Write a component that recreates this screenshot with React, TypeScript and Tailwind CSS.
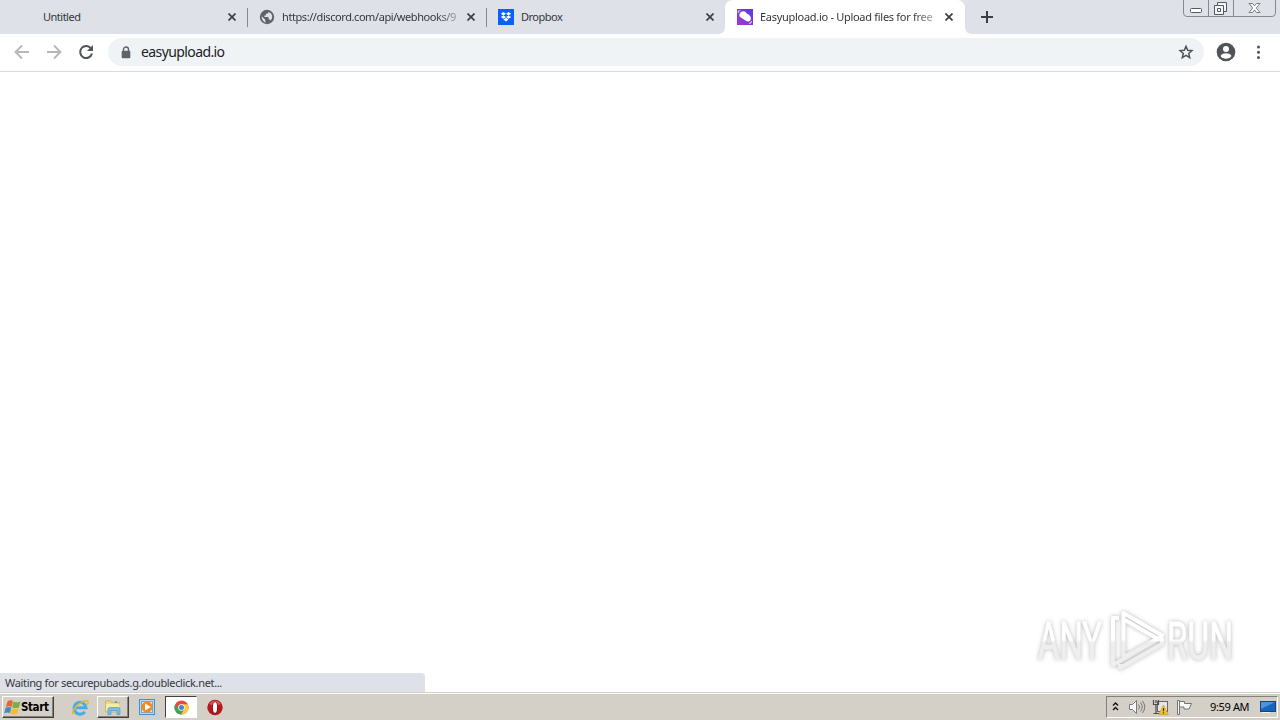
import type { ReactNode } from 'react'
import clsx from 'clsx'

export default function App() {
  return (
    <div className="flex h-[720px] w-[1280px] flex-col overflow-hidden bg-white font-['Noto_Sans','Open_Sans',sans-serif] text-[11px] text-[#34373b]">
      <TabStrip />
      <Toolbar />
      <main className="relative flex-1">
        <Watermark />
        <div className="absolute bottom-0 left-0 flex h-[19px] w-[425px] items-center rounded-tr-[4px] bg-[#dee1e8] pl-[5px] pt-[2px]">
          <span className="whitespace-nowrap tracking-[-0.34px]">Waiting for securepubads.g.doubleclick.net...</span>
        </div>
      </main>
      <Taskbar />
    </div>
  )
}

/* Tabs */

function TabStrip() {
  return (
    <header className="relative flex h-[34px] shrink-0 bg-[#dee1e8]">
      <Tab title="Untitled" className="w-[248px] pl-[43px]" titleClass="tracking-[-0.5px]" divider />
      <Tab title="https://discord.com/api/webhooks/9" icon={<GlobeIcon />} className="w-[239px] pl-[11px]" titleClass="tracking-[-0.42px]" divider fade />
      <Tab title="Dropbox" icon={<DropboxIcon />} className="w-[238px] pl-[11px]" titleClass="tracking-[-0.5px]" />
      <Tab title="Easyupload.io - Upload files for free" icon={<EasyuploadIcon />} className="w-[240px] pl-[12px]" titleClass="tracking-[-0.29px]" active fade />
      <svg className="ml-[16px] mt-[11px]" width="12" height="12" viewBox="0 0 12 12" stroke="#3c4043" strokeWidth="2">
        <path d="M6 0v12M0 6h12" />
      </svg>
      <WindowButtons />
    </header>
  )
}

function Tab({
  title,
  icon,
  className,
  titleClass,
  active,
  divider,
  fade,
}: {
  title: string
  icon?: ReactNode
  className: string
  titleClass?: string
  active?: boolean
  divider?: boolean
  fade?: boolean
}) {
  return (
    <div className={clsx('relative flex shrink-0 items-center', active && 'rounded-t-[8px] bg-white', className)}>
      {icon && <span className="mr-[7px] shrink-0">{icon}</span>}
      <span
        className={clsx(
          'w-[176px] whitespace-nowrap',
          fade && '[mask-image:linear-gradient(to_right,black_87%,#0005)]',
          titleClass,
        )}
      >
        {title}
      </span>
      <svg className={clsx('absolute top-[13px]', active || divider ? 'right-[12px]' : 'right-[11px]')} width="8" height="8" viewBox="0 0 8 8" stroke="#3c4043" strokeWidth="1.7">
        <path d="M.5.5l7 7M7.5.5l-7 7" />
      </svg>
      {divider && <i className="absolute right-0 top-[8px] h-[19px] w-px bg-[#85888d]" />}
      {active && (
        <>
          <svg className="absolute bottom-0 left-[-7px]" width="7" height="7" viewBox="0 0 7 7">
            <path d="M7 0v7H0Q7 7 7 0Z" fill="#fff" />
          </svg>
          <svg className="absolute bottom-0 right-[-7px]" width="7" height="7" viewBox="0 0 7 7">
            <path d="M0 0v7h7Q0 7 0 0Z" fill="#fff" />
          </svg>
        </>
      )}
    </div>
  )
}

function WindowButtons() {
  return (
    <div className="absolute right-[4px] top-[-2px] flex h-[19px] w-[93px] overflow-hidden rounded-b-[4px] border border-[#858990] bg-[#dee1e8]">
      <div className="w-[25px] border-r border-[#858990]">
        <svg width="24" height="18" viewBox="0 0 24 18">
          <rect x="6.5" y="9.5" width="11" height="4" rx="1" fill="#fff" stroke="#55585f" />
        </svg>
      </div>
      <div className="w-[25px] border-r border-[#858990]">
        <svg width="24" height="18" viewBox="0 0 24 18" fill="#f5f6f8" stroke="#55585f">
          <path d="M8.500 3.500h9v9h-9z" />
          <path d="M5.500 6.500h9v9h-9z" />
          <path d="M8.500 9.500h3v3h-3z" />
        </svg>
      </div>
      <svg width="41" height="18" viewBox="0 0 41 18" fill="#fff" stroke="#6c7077" strokeWidth=".9">
        <path d="M15 4.500h3.500l2 2.300 2-2.300H26l-3.700 4.500 3.700 4.500h-3.500l-2-2.500-2 2.500H15L18.700 9Z" />
      </svg>
    </div>
  )
}

/* Address bar */

function Toolbar() {
  return (
    <div className="flex h-[38px] shrink-0 items-center border-b border-[#d9dadb] bg-white pb-px">
      <svg className="ml-[14px]" width="16" height="16" viewBox="0 0 16 16" fill="none" stroke="#b5b7ba" strokeWidth="1.8">
        <path d="M15 8H2M8 1.500L1.500 8 8 14.500" />
      </svg>
      <svg className="ml-[16px]" width="16" height="16" viewBox="0 0 16 16" fill="none" stroke="#b5b7ba" strokeWidth="1.8">
        <path d="M1 8h13M8 1.500L14.500 8 8 14.500" />
      </svg>
      <svg className="ml-[16px]" width="16" height="16" viewBox="0 0 16 16" fill="none" stroke="#505357" strokeWidth="2">
        <path d="M13.200 4.700A6 6 0 1 0 14 9.500" />
        <path d="M15 1v6H9Z" fill="#505357" stroke="none" />
      </svg>
      <div className="ml-[14px] flex h-[28px] w-[1096px] items-center rounded-full bg-[#f0f3f5]">
        <svg className="ml-[13px]" width="10" height="13" viewBox="0 0 10 13">
          <path d="M2.500 5V3.500a2.500 2.500 0 0 1 5 0V5" fill="none" stroke="#5f6368" strokeWidth="1.400" />
          <rect x=".7" y="4.800" width="8.600" height="7.400" rx="1" fill="#5f6368" />
        </svg>
        <span className="ml-[10px] pb-[2px] text-[14px] tracking-[-0.6px] text-[#202124]">easyupload.io</span>
        <svg className="ml-auto mr-[10px]" width="16" height="16" viewBox="0 0 16 16" fill="none" stroke="#505357" strokeWidth="1.500">
          <path d="M8 2.300l1.700 3.900 4.200.4-3.200 2.800 1 4.200L8 11.400l-3.700 2.200 1-4.200-3.200-2.800 4.200-.4Z" />
        </svg>
      </div>
      <svg className="ml-[12px]" width="20" height="20" viewBox="0 0 20 20">
        <circle cx="10" cy="10" r="9.300" fill="#505357" />
        <circle cx="10" cy="7" r="3" fill="#fff" />
        <path d="M4.500 14c1.100-2 3.200-2.700 5.500-2.700s4.400.7 5.500 2.700A6.700 6.700 0 0 1 4.500 14Z" fill="#fff" />
      </svg>
      <svg className="ml-[20px]" width="5" height="16" viewBox="0 0 5 16" fill="#505357">
        <circle cx="2.500" cy="3" r="1.500" />
        <circle cx="2.500" cy="8.300" r="1.500" />
        <circle cx="2.500" cy="13.600" r="1.500" />
      </svg>
    </div>
  )
}

function GlobeIcon() {
  return (
    <svg width="16" height="16" viewBox="0 0 16 16">
      <circle cx="8" cy="8" r="7.200" fill="#5f6368" />
      <path d="M9.500 3c-.2 1.300-1 1.800-2.700 2v1.400H5.400v1.500h3.900c.5.900.4 1.900.6 2.500 1.100 0 1.500.5 1.800 1.100A5 5 0 0 0 9.500 3ZM2.700 7.200l3.500 3.500v1.100c.1.700.7 1.100.8 1.600-2.700-.5-4.500-3.200-4.300-6.200Z" fill="#dee1e8" />
    </svg>
  )
}

function DropboxIcon() {
  return (
    <svg width="16" height="16" viewBox="0 0 16 16">
      <rect width="16" height="16" fill="#0861fd" />
      <path d="M5.400 3L8 4.700 5.400 6.400 2.800 4.700ZM10.600 3l2.600 1.700-2.600 1.700L8 4.700ZM2.800 8.100l2.600-1.700L8 8.100 5.400 9.800ZM10.600 6.400l2.600 1.700-2.600 1.700L8 8.100ZM5.400 10.500L8 8.800l2.600 1.700L8 12.600Z" fill="#fff" />
    </svg>
  )
}

function EasyuploadIcon() {
  return (
    <svg width="16" height="16" viewBox="0 0 16 16">
      <defs>
        <linearGradient id="eu" x1="1" y1="0" x2="0" y2="1">
          <stop stopColor="#5b38ee" />
          <stop offset="1" stopColor="#a33bc2" />
        </linearGradient>
      </defs>
      <rect width="16" height="16" fill="url(#eu)" />
      <path d="M3.500 3.500C5.500 1.600 8.600 2.200 9.600 4.500c3 .9 4.800 3.800 4.200 6-.6 2.100-3 2.600-5 1.300L3.400 8.300C1.900 7 2 4.900 3.500 3.500Z" fill="#fff" />
      <path d="M1.200 4.200Q.8 1.800 3.400 1.500M12 14.300q2.300.2 2.500-2.300" stroke="#dcc3f5" strokeWidth="1.200" fill="none" />
    </svg>
  )
}

/* Logo in the corner of the page */

function Watermark() {
  return (
    <svg className="absolute bottom-[12px] right-[40px] overflow-visible drop-shadow-[0_0_2px_rgba(0,0,0,0.28)]" width="210" height="80" viewBox="0 0 210 80">
      <defs>
        <linearGradient id="wm" x1="0" y1="0" x2="0" y2="80" gradientUnits="userSpaceOnUse">
          <stop offset=".5" stopColor="#fff" />
          <stop offset=".53" stopColor="#eee" />
          <stop offset="1" stopColor="#efefef" />
        </linearGradient>
      </defs>
      <g fill="url(#wm)" stroke="url(#wm)" strokeWidth=".8" fontFamily="Roboto, sans-serif" fontSize="51">
        <text x="8" y="59" textLength="64" lengthAdjust="spacingAndGlyphs">ANY</text>
        <text x="137" y="59" textLength="66" lengthAdjust="spacingAndGlyphs">RUN</text>
      </g>
      <g fill="none" stroke="url(#wm)" strokeWidth="4" strokeLinejoin="round">
        <path d="M93.500 57V13L132 35.500l-3 4L95 20" />
        <path d="M89 18h-6v47l48-28" />
        <path d="M93.500 57L129 38" />
        <path d="M90 64v4l42-24v-6" />
      </g>
    </svg>
  )
}

/* Taskbar */

function Taskbar() {
  return (
    <footer className="flex h-[28px] shrink-0 items-start border-t border-[#d4d0c8] bg-[#d4d0c8] text-black">
      <div className="flex h-full w-full items-start border-t border-white pt-[2px]">
        <div className="ml-[2px] flex h-[22px] w-[52px] items-center border border-b-[#404040] border-l-white border-r-[#404040] border-t-white pl-px shadow-[inset_-1px_-1px_#858178]">
          <WindowsFlag />
          <span className="pt-px font-['DejaVu_Sans_Condensed','Noto_Sans',sans-serif] text-[11.5px] font-bold tracking-[-0.4px]">Start</span>
        </div>
        <svg className="ml-[17px] mt-[3px]" width="18" height="17" viewBox="0 0 18 17" fill="none">
          <path d="M13.800 12.800A6 6 0 1 1 15 8.800H5" stroke="#45ade8" strokeWidth="3" />
          <path d="M3.500 13.200C.2 16.700.8 12.200 4.500 8.200S14 .8 16.500 2c1.100.7.5 2.500-.5 4" stroke="#e5b831" strokeWidth="1.400" />
        </svg>
        <div className="ml-[8px] flex h-[22px] w-[32px] items-center justify-center border border-b-[#404040] border-l-white border-r-[#404040] border-t-white shadow-[inset_-1px_-1px_#858178]">
          <svg width="18" height="18" viewBox="0 0 18 18">
            <path d="M1.500 3h5l1 1.500h8V14h-14Z" fill="#f1d988" stroke="#d5b75c" />
            <path d="M2 6h13.500v6H2Z" fill="#faeaa5" />
            <path d="M4 16.500v-5q0-2 2-2h8q2 0 2 2v5h-3v-4H7v4Z" fill="#79bfe2" stroke="#5199c5" strokeWidth=".7" />
            <path d="M11 3h2v2h-2Z" fill="#54a3da" />
          </svg>
        </div>
        <svg className="ml-[10px] mt-[3px]" width="16" height="16" viewBox="0 0 16 16">
          <rect x=".5" y=".5" width="15" height="15" fill="#b6d9f3" stroke="#4a8ec6" />
          <rect x="2.500" y="2.500" width="11" height="11" fill="#d5e9f6" stroke="#72a8d3" />
          <circle cx="8" cy="8" r="5.500" fill="#f38b16" />
          <path d="M6 4.500L12 8l-6 3.500Z" fill="#fff" />
        </svg>
        <div className="ml-[10px] flex h-[22px] w-[32px] items-center justify-center border border-b-white border-l-[#404040] border-r-white border-t-[#404040] bg-white">
          <svg width="15" height="15" viewBox="0 0 16 16">
            <circle cx="8" cy="8" r="7.500" fill="#e64b3c" />
            <path d="M1.500 4.200A7.500 7.500 0 0 0 7.500 15.500l3.700-6L8 8 4.800 9.700Z" fill="#3da657" />
            <path d="M8 4.500h6.600A7.500 7.500 0 0 1 7.500 15.500l3.600-5.900Z" fill="#f8ca3c" />
            <circle cx="8" cy="8" r="3.500" fill="#fff" />
            <circle cx="8" cy="8" r="2.700" fill="#4386d9" />
          </svg>
        </div>
        <svg className="ml-[10px] mt-[3px]" width="16" height="17" viewBox="0 0 16 17">
          <circle cx="8" cy="8.500" r="7.700" fill="#b5171e" />
          <path d="M2 5Q8-2 14 5L8 7Z" fill="#df5455" />
          <ellipse cx="8" cy="8.500" rx="3" ry="6" fill="#8d1015" />
          <ellipse cx="8" cy="8.500" rx="2.100" ry="5.300" fill="#fff" />
        </svg>
        <Tray />
      </div>
    </footer>
  )
}

function WindowsFlag() {
  return (
    <svg width="17" height="17" viewBox="0 0 17 17">
      <path d="M3.500 2.500Q6 .5 8.900 2L7.600 7.900Q4.800 6.500 1.800 8.200Z" fill="#e66530" />
      <path d="M9.500 2.500Q12.500 4.200 16.500 2.500l-1.500 5.700Q11.300 9.900 8.200 8.200Z" fill="#79ae40" />
      <path d="M1.500 9Q4.500 7.200 7.300 8.600L6 14Q3.200 12.600.2 14.500Z" fill="#4289cb" />
      <path d="M8 9q3 1.700 6.700 0L13.300 14.700q-3.300 1.600-6.700 0Z" fill="#f3bd32" />
    </svg>
  )
}

function Tray() {
  return (
    <div className="ml-auto mr-[2px] flex h-[22px] w-[172px] items-center border border-b-white border-l-[#858178] border-r-white border-t-[#858178]">
      <svg className="ml-[5px]" width="7" height="10" viewBox="0 0 7 10" fill="none" stroke="#111" strokeWidth="1.400">
        <path d="M1 3.500L3.500 1 6 3.500M1 8L3.500 5.500 6 8" />
      </svg>
      <svg className="ml-[9px]" width="18" height="16" viewBox="0 0 17 16" fill="none" stroke="#77797a">
        <path d="M1 5.500h3l4-4v13l-4-4H1Z" fill="#f7f7f7" />
        <path d="M10 5.500q2 2.500 0 5M12 3.500q3.500 4.500 0 9M14 2q4.500 6 0 12" />
      </svg>
      <svg className="ml-[6px]" width="17" height="16" viewBox="0 0 17 16">
        <rect x="5.500" y="2.500" width="10" height="10" fill="#e4e6e5" stroke="#666867" />
        <path d="M1.500 1v4.500h5V1M4 1v3M4 5.500v9M1.500 14.500h6" fill="none" stroke="#4b4d4b" strokeWidth="1.200" />
        <path d="M11.500 6L16.300 15.500H6.700Z" fill="#f4c51f" stroke="#c19822" strokeWidth=".6" />
        <path d="M11.500 9v3.300M11.500 13.300v1.200" stroke="#333" strokeWidth="1.200" />
      </svg>
      <svg className="ml-[7px]" width="17" height="16" viewBox="0 0 17 16" fill="#fafafa" stroke="#727473">
        <path d="M1.500 1.500h2v14h-2zM3.500 2.500h5v2h7l-2.500 5.500h-5v-2h-4.500Z" />
      </svg>
      <span className="ml-[17px] whitespace-nowrap tracking-[-0.35px]">9:59 AM</span>
      <svg className="ml-auto mr-px" width="16" height="14" viewBox="0 0 16 14">
        <rect x=".5" y="1.500" width="15" height="10" fill="#1765bf" stroke="#164474" />
        <path d="M1 2h14L1 9Z" fill="#4c94db" />
        <path d="M2 12.500h8" stroke="#eef4fa" />
      </svg>
    </div>
  )
}
